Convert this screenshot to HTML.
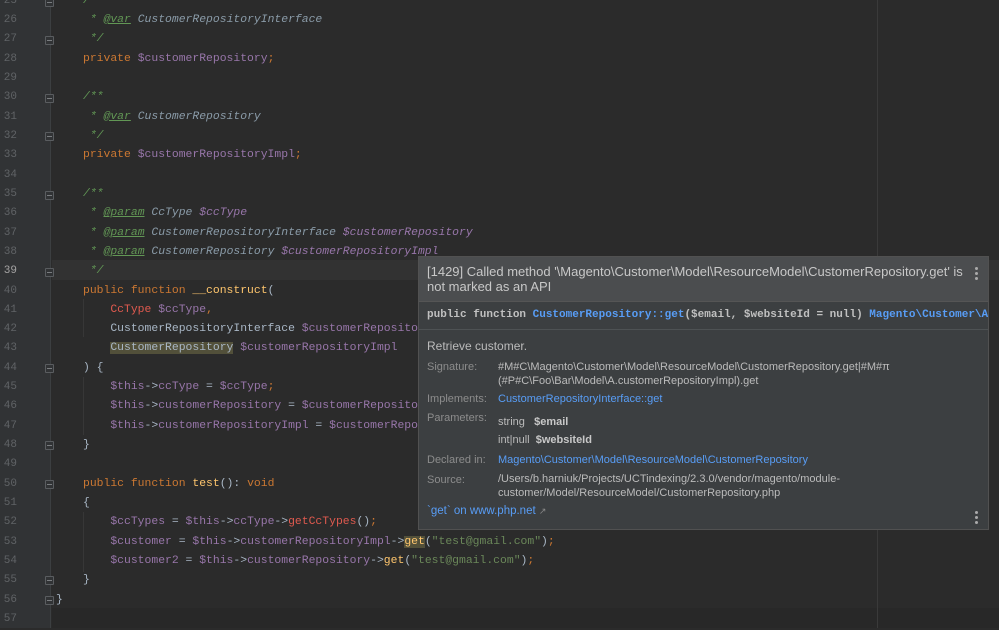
<!DOCTYPE html>
<html><head><meta charset="utf-8"><style>
*{margin:0;padding:0;box-sizing:border-box}
body{width:999px;height:628px;overflow:hidden;background:#2b2b2b;position:relative;font-family:"Liberation Mono",monospace;font-size:11.4px;color:#a9b7c6}
#gut{position:absolute;left:0;top:0;width:51px;height:628px;background:#313335;border-right:1px solid #3c3f41}
#code{position:absolute;left:0;top:1.5px;width:999px;height:628px}
.ln{position:absolute;left:0;width:17px;text-align:right;color:#606366;font-size:11px;height:19.32px;line-height:19.32px}
.cl{position:absolute;left:83px;white-space:pre;height:19.32px;line-height:19.32px}
.fold{position:absolute;left:45px;width:9px;height:9px;border:1px solid #5a5d60;border-radius:1px;background:#313335}
.fold:after{content:"";position:absolute;left:1px;top:3px;width:5px;height:1px;background:#7a7d80}
.k{color:#cc7832}.v{color:#9876aa}.c{color:#629755;font-style:italic}.t{color:#629755;text-decoration:underline;font-style:italic}.d{color:#8a9ba8;font-style:italic}.dv{color:#9876aa;font-style:italic}
.f{color:#ffc66d}.s{color:#6a8759}.r{color:#e05a4f}
.ig{position:absolute;width:1px;background:#373737}
#pop{position:absolute;left:418px;top:256px;width:571px;height:274px;background:#3c3f41;border:1px solid #515151;font-family:"Liberation Sans",sans-serif;font-size:11px;color:#bbbbbb;overflow:hidden}
#ph{background:#4b4d4f;height:45px;padding:7px 8px 0 8px;line-height:15px;font-size:13px;color:#c8c8c8;border-bottom:1px solid #555;white-space:nowrap}
#sig{height:28px;line-height:27px;padding-left:8px;font-family:"Liberation Mono",monospace;font-size:11px;font-weight:bold;color:#c0c0c0;white-space:nowrap;border-bottom:1px solid #4e5254}
.b{color:#589df6;font-weight:bold}
.lnk{color:#589df6}
.lab{position:absolute;left:8px;color:#8c8c8c}
.val{position:absolute;left:79px;white-space:nowrap;line-height:13.5px}
.dots{position:absolute;right:10px;width:3px}
.dots i{display:block;width:3px;height:3px;background:#aaa;border-radius:50%;margin-bottom:2px}
</style></head><body>
<div id="gut"></div>
<div style="position:absolute;left:52px;top:260px;width:947px;height:20px;background:#323232"></div>
<div style="position:absolute;left:52px;top:608px;width:947px;height:20px;background:#282828"></div>
<div style="position:absolute;left:877px;top:0;width:1px;height:628px;background:#3a3a3a"></div>
<div class="ig" style="left:83px;top:299px;height:38px"></div>
<div class="ig" style="left:83px;top:377px;height:58px"></div>
<div class="ig" style="left:83px;top:512px;height:60px"></div>
<div id="code">
<div class="ln" style="top:-10px">25</div><div class="cl" style="top:-10px"><span class="c">/**</span></div>
<div class="ln" style="top:9.5px">26</div><div class="cl" style="top:9.5px"><span class="c"> * </span><span class="t">@var</span> <span class="d">CustomerRepositoryInterface</span></div>
<div class="ln" style="top:28.8px">27</div><div class="cl" style="top:28.8px"><span class="c"> */</span></div>
<div class="ln" style="top:48.1px">28</div><div class="cl" style="top:48.1px"><span class="k">private </span><span class="v">$customerRepository</span><span class="k">;</span></div>
<div class="ln" style="top:67.4px">29</div>
<div class="ln" style="top:86.8px">30</div><div class="cl" style="top:86.8px"><span class="c">/**</span></div>
<div class="ln" style="top:106.1px">31</div><div class="cl" style="top:106.1px"><span class="c"> * </span><span class="t">@var</span> <span class="d">CustomerRepository</span></div>
<div class="ln" style="top:125.4px">32</div><div class="cl" style="top:125.4px"><span class="c"> */</span></div>
<div class="ln" style="top:144.7px">33</div><div class="cl" style="top:144.7px"><span class="k">private </span><span class="v">$customerRepositoryImpl</span><span class="k">;</span></div>
<div class="ln" style="top:164px">34</div>
<div class="ln" style="top:183.4px">35</div><div class="cl" style="top:183.4px"><span class="c">/**</span></div>
<div class="ln" style="top:202.7px">36</div><div class="cl" style="top:202.7px"><span class="c"> * </span><span class="t">@param</span> <span class="d">CcType </span><span class="dv">$ccType</span></div>
<div class="ln" style="top:222px">37</div><div class="cl" style="top:222px"><span class="c"> * </span><span class="t">@param</span> <span class="d">CustomerRepositoryInterface </span><span class="dv">$customerRepository</span></div>
<div class="ln" style="top:241.3px">38</div><div class="cl" style="top:241.3px"><span class="c"> * </span><span class="t">@param</span> <span class="d">CustomerRepository </span><span class="dv">$customerRepositoryImpl</span></div>
<div class="ln" style="top:260.6px;color:#a4a3a3">39</div><div class="cl" style="top:260.6px"><span class="c"> */</span></div>
<div class="ln" style="top:280px">40</div><div class="cl" style="top:280px"><span class="k">public function </span><span class="f">__construct</span>(</div>
<div class="ln" style="top:299.3px">41</div><div class="cl" style="top:299.3px">    <span class="r">CcType</span> <span class="v">$ccType</span><span class="k">,</span></div>
<div class="ln" style="top:318.6px">42</div><div class="cl" style="top:318.6px">    CustomerRepositoryInterface <span class="v">$customerRepository</span><span class="k">,</span></div>
<div class="ln" style="top:337.9px">43</div><div class="cl" style="top:337.9px">    <span style="background:#52503a">CustomerRepository</span> <span class="v">$customerRepositoryImpl</span></div>
<div class="ln" style="top:357.2px">44</div><div class="cl" style="top:357.2px">) {</div>
<div class="ln" style="top:376.6px">45</div><div class="cl" style="top:376.6px">    <span class="v">$this</span>-><span class="v">ccType</span> = <span class="v">$ccType</span><span class="k">;</span></div>
<div class="ln" style="top:395.9px">46</div><div class="cl" style="top:395.9px">    <span class="v">$this</span>-><span class="v">customerRepository</span> = <span class="v">$customerRepository</span><span class="k">;</span></div>
<div class="ln" style="top:415.2px">47</div><div class="cl" style="top:415.2px">    <span class="v">$this</span>-><span class="v">customerRepositoryImpl</span> = <span class="v">$customerRepositoryImpl</span><span class="k">;</span></div>
<div class="ln" style="top:434.5px">48</div><div class="cl" style="top:434.5px">}</div>
<div class="ln" style="top:453.8px">49</div>
<div class="ln" style="top:473.2px">50</div><div class="cl" style="top:473.2px"><span class="k">public function </span><span class="f">test</span>(): <span class="k">void</span></div>
<div class="ln" style="top:492.5px">51</div><div class="cl" style="top:492.5px">{</div>
<div class="ln" style="top:511.8px">52</div><div class="cl" style="top:511.8px">    <span class="v">$ccTypes</span> = <span class="v">$this</span>-><span class="v">ccType</span>-><span class="r">getCcTypes</span>()<span class="k">;</span></div>
<div class="ln" style="top:531.1px">53</div><div class="cl" style="top:531.1px">    <span class="v">$customer</span> = <span class="v">$this</span>-><span class="v">customerRepositoryImpl</span>-><span class="f" style="background:#52503a">get</span>(<span class="s">"test@gmail.com"</span>)<span class="k">;</span></div>
<div class="ln" style="top:550.4px">54</div><div class="cl" style="top:550.4px">    <span class="v">$customer2</span> = <span class="v">$this</span>-><span class="v">customerRepository</span>-><span class="f">get</span>(<span class="s">"test@gmail.com"</span>)<span class="k">;</span></div>
<div class="ln" style="top:569.8px">55</div><div class="cl" style="top:569.8px">}</div>
<div class="ln" style="top:589.1px">56</div><div class="cl" style="top:589.1px;left:56px">}</div>
<div class="ln" style="top:608.4px">57</div>

<div class="fold" style="top:-4px"></div><div class="fold" style="top:34px"></div><div class="fold" style="top:92px"></div><div class="fold" style="top:130px"></div><div class="fold" style="top:189px"></div><div class="fold" style="top:266px"></div><div class="fold" style="top:362px"></div><div class="fold" style="top:439px"></div><div class="fold" style="top:478px"></div><div class="fold" style="top:574px"></div><div class="fold" style="top:594px"></div>
</div>

<div id="pop">
<div id="ph">[1429] Called method '\Magento\Customer\Model\ResourceModel\CustomerRepository.get' is<br>not marked as an API</div>
<div class="dots" style="top:10px"><i></i><i></i><i></i></div>
<div id="sig">public function <span class="b">CustomerRepository::get</span>($email, $websiteId = null) <span class="b">Magento\Customer\Api\Data</span></div>
<div style="position:absolute;left:8px;top:82px;font-size:12px">Retrieve customer.</div>
<div class="lab" style="top:104px">Signature:</div><div class="val" style="top:104px">#M#C\Magento\Customer\Model\ResourceModel\CustomerRepository.get|#M#π<br>(#P#C\Foo\Bar\Model\A.customerRepositoryImpl).get</div>
<div class="lab" style="top:136px">Implements:</div><div class="val lnk" style="top:136px">CustomerRepositoryInterface::get</div>
<div class="lab" style="top:155px">Parameters:</div><div class="val" style="top:159px">string&nbsp;&nbsp; <b style="color:#c8c8c8">$email</b></div>
<div class="val" style="top:177px">int|null&nbsp; <b style="color:#c8c8c8">$websiteId</b></div>
<div class="lab" style="top:197px">Declared in:</div><div class="val lnk" style="top:197px">Magento\Customer\Model\ResourceModel\CustomerRepository</div>
<div class="lab" style="top:217px">Source:</div><div class="val" style="top:216px">/Users/b.harniuk/Projects/UCTindexing/2.3.0/vendor/magento/module-<br>customer/Model/ResourceModel/CustomerRepository.php</div>
<div class="lnk" style="position:absolute;left:8px;top:248px;font-size:11.5px">`get` on www.php.net <span style="color:#888;font-size:9px">↗</span></div>
<div class="dots" style="top:254px"><i></i><i></i><i></i></div>
</div>
</body></html>
